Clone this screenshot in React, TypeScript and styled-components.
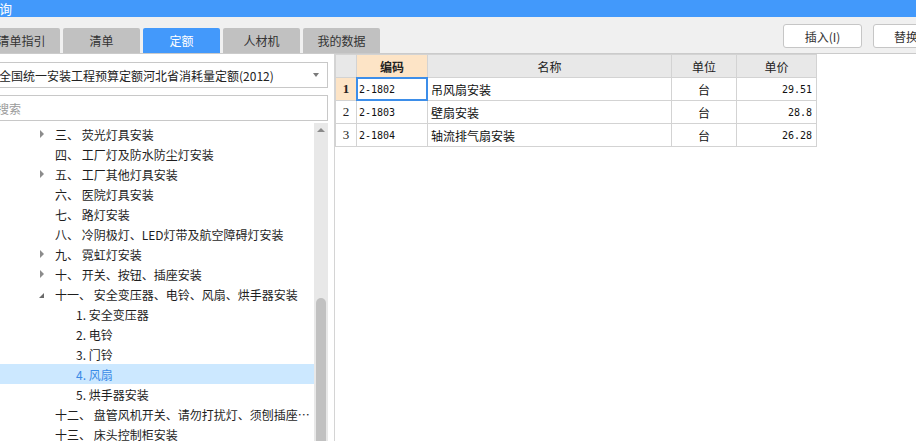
import styled, { createGlobalStyle } from "styled-components";

const GlobalStyle = createGlobalStyle`
  html, body {
    margin: 0;
    padding: 0;
    background: #fff;
  }
  body {
    font-family: "Noto Sans CJK SC", "Noto Sans", sans-serif;
    font-size: 12px;
    color: #222;
    overflow: hidden;
  }
  * {
    box-sizing: border-box;
  }
`;

type TreeItem = {
  label: string;
  level: number;
  arrow?: "closed" | "open";
  active?: boolean;
};

const treeItems: TreeItem[] = [
  { label: "三、 荧光灯具安装", level: 0, arrow: "closed" },
  { label: "四、 工厂灯及防水防尘灯安装", level: 0 },
  { label: "五、 工厂其他灯具安装", level: 0, arrow: "closed" },
  { label: "六、 医院灯具安装", level: 0 },
  { label: "七、 路灯安装", level: 0 },
  { label: "八、 冷阴极灯、LED灯带及航空障碍灯安装", level: 0 },
  { label: "九、 霓虹灯安装", level: 0, arrow: "closed" },
  { label: "十、 开关、按钮、插座安装", level: 0, arrow: "closed" },
  { label: "十一、 安全变压器、电铃、风扇、烘手器安装", level: 0, arrow: "open" },
  { label: "1. 安全变压器", level: 1 },
  { label: "2. 电铃", level: 1 },
  { label: "3. 门铃", level: 1 },
  { label: "4. 风扇", level: 1, active: true },
  { label: "5. 烘手器安装", level: 1 },
  { label: "十二、 盘管风机开关、请勿打扰灯、须刨插座箱安装", level: 0 },
  { label: "十三、 床头控制柜安装", level: 0 },
];

const rows = [
  { code: "2-1802", name: "吊风扇安装", unit: "台", price: "29.51" },
  { code: "2-1803", name: "壁扇安装", unit: "台", price: "28.8" },
  { code: "2-1804", name: "轴流排气扇安装", unit: "台", price: "26.28" },
];

const tabs = ["清单指引", "清单", "定额", "人材机", "我的数据"];

const App = () => {
  return (
    <Window>
      <GlobalStyle />
      <TitleBar>
        <TitleText>定额查询</TitleText>
      </TitleBar>
      <Toolbar>
        <Tabs>
          {tabs.map((t) => (
            <Tab key={t} $active={t === "定额"}>
              {t}
            </Tab>
          ))}
        </Tabs>
        <Buttons>
          <Button $width={79}>插入(I)</Button>
          <Button $width={66}>替换</Button>
        </Buttons>
      </Toolbar>
      <Main>
        <LeftPanel>
          <Select>
            <SelectText>全国统一安装工程预算定额河北省消耗量定额(2012)</SelectText>
            <SelectArrow />
          </Select>
          <Search placeholder="搜索" />
          <TreeArea>
            <TreeList>
              {treeItems.map((item) => (
                <TreeRow key={item.label} $level={item.level} $active={item.active}>
                  <ArrowSlot>
                    {item.arrow === "closed" && <ClosedArrow />}
                    {item.arrow === "open" && <OpenArrow />}
                  </ArrowSlot>
                  <TreeLabel>{item.label}</TreeLabel>
                </TreeRow>
              ))}
            </TreeList>
            <ScrollBar>
              <ScrollUp>
                <UpArrow />
              </ScrollUp>
              <ScrollThumb />
            </ScrollBar>
          </TreeArea>
        </LeftPanel>
        <RightPanel>
          <Grid>
            <HeadCell />
            <HeadCell $current>编码</HeadCell>
            <HeadCell>名称</HeadCell>
            <HeadCell>单位</HeadCell>
            <HeadCell>单价</HeadCell>
            {rows.map((r, i) => (
              <Row key={r.code}>
                <NumCell $current={i === 0}>{i + 1}</NumCell>
                <CodeCell $selected={i === 0}>{r.code}</CodeCell>
                <Cell>{r.name}</Cell>
                <Cell $align="center">{r.unit}</Cell>
                <PriceCell>{r.price}</PriceCell>
              </Row>
            ))}
          </Grid>
        </RightPanel>
      </Main>
    </Window>
  );
};

const Window = styled.div`
  width: 916px;
  height: 441px;
  overflow: hidden;
  display: flex;
  flex-direction: column;
`;

const TitleBar = styled.div`
  height: 17px;
  background: #4299fb;
  color: #fff;
  display: flex;
  align-items: center;
  overflow: hidden;
`;

const TitleText = styled.span`
  margin-left: -40px;
  font-size: 13px;
  line-height: 17px;
  white-space: nowrap;
`;

const Toolbar = styled.div`
  height: 37px;
  background: #f0f0f0;
  border-bottom: 1px solid #cbcbcb;
  display: flex;
  justify-content: space-between;
  overflow: hidden;
`;

const Tabs = styled.div`
  display: flex;
  align-items: flex-end;
  gap: 3px;
  margin-left: -17px;
`;

const Tab = styled.div<{ $active?: boolean }>`
  width: 77px;
  height: 25px;
  border-radius: 2px 2px 0 0;
  background: ${(p) => (p.$active ? "#4399fb" : "#c1c1c1")};
  color: ${(p) => (p.$active ? "#fff" : "#333")};
  display: flex;
  align-items: center;
  justify-content: center;
  font-size: 12px;
  white-space: nowrap;
`;

const Buttons = styled.div`
  display: flex;
  gap: 11px;
  padding-top: 7px;
  margin-right: -23px;
`;

const Button = styled.div<{ $width: number }>`
  width: ${(p) => p.$width}px;
  height: 24px;
  background: #fff;
  border: 1px solid #c6c6c6;
  border-radius: 3px;
  display: flex;
  align-items: center;
  justify-content: center;
  font-size: 12px;
  color: #333;
  white-space: nowrap;
`;

const Main = styled.div`
  flex: 1;
  display: flex;
  min-height: 0;
`;

const LeftPanel = styled.div`
  width: 343px;
  margin-left: -8px;
  padding: 8px 6px 0 0;
  border-right: 1px solid #d4d4d4;
  display: flex;
  flex-direction: column;
  flex-shrink: 0;
`;

const Select = styled.div`
  height: 26px;
  border: 1px solid #c8c8c8;
  background: #fff;
  display: flex;
  align-items: center;
  padding: 0 8px 0 6px;
`;

const SelectText = styled.span`
  flex: 1;
  white-space: nowrap;
  color: #222;
`;

const SelectArrow = styled.span`
  width: 0;
  height: 0;
  border-left: 3.5px solid transparent;
  border-right: 3.5px solid transparent;
  border-top: 4px solid #7a7a7a;
`;

const Search = styled.input`
  margin-top: 7px;
  height: 26px;
  border: 1px solid #c8c8c8;
  padding: 0 0 0 4px;
  font-family: inherit;
  font-size: 12px;
  outline: none;
  &::placeholder {
    color: #9a9a9a;
  }
`;

const TreeArea = styled.div`
  flex: 1;
  min-height: 0;
  margin-top: 2px;
  display: flex;
  overflow: hidden;
`;

const TreeList = styled.div`
  flex: 1;
  min-width: 0;
  padding-top: 1px;
`;

const TreeRow = styled.div<{ $level: number; $active?: boolean }>`
  height: 20px;
  display: flex;
  align-items: center;
  padding-left: ${(p) => 47 + p.$level * 21}px;
  padding-right: 4px;
  background: ${(p) => (p.$active ? "#cce8ff" : "transparent")};
  color: ${(p) => (p.$active ? "#3a8ae6" : "#1e1e1e")};
`;

const ArrowSlot = styled.span`
  width: 16px;
  flex-shrink: 0;
  display: flex;
  align-items: center;
`;

const ClosedArrow = styled.span`
  width: 0;
  height: 0;
  margin-left: 1px;
  border-top: 4px solid transparent;
  border-bottom: 4px solid transparent;
  border-left: 4px solid #8c8c8c;
`;

const OpenArrow = styled.span`
  width: 0;
  height: 0;
  margin-top: 2px;
  border-left: 5px solid transparent;
  border-bottom: 5px solid #6a6a6a;
`;

const TreeLabel = styled.span`
  white-space: nowrap;
  overflow: hidden;
  text-overflow: ellipsis;
`;

const ScrollBar = styled.div`
  width: 14px;
  flex-shrink: 0;
  background: #e8e8e8;
  display: flex;
  flex-direction: column;
  align-items: center;
`;

const ScrollUp = styled.div`
  height: 14px;
  display: flex;
  align-items: center;
  justify-content: center;
`;

const UpArrow = styled.span`
  width: 0;
  height: 0;
  border-left: 4px solid transparent;
  border-right: 4px solid transparent;
  border-bottom: 4px solid #8a8a8a;
`;

const ScrollThumb = styled.div`
  width: 10px;
  flex: 1;
  margin-top: 161px;
  border-radius: 5px 5px 0 0;
  background: #c1c1c1;
`;

const RightPanel = styled.div`
  flex: 1;
  background: #fff;
`;

const Grid = styled.div`
  display: grid;
  grid-template-columns: 20px 70px 243px 64px 79px;
  grid-auto-rows: 22px;
  gap: 1px;
  width: 482px;
  background: #d3d3d3;
  border: 1px solid #d3d3d3;
`;

const Row = styled.div`
  display: contents;
`;

const HeadCell = styled.div<{ $current?: boolean }>`
  background: ${(p) => (p.$current ? "#fde4c6" : "#e8e8e8")};
  font-weight: ${(p) => (p.$current ? 700 : 400)};
  display: flex;
  align-items: center;
  justify-content: center;
  color: #222;
`;

const Cell = styled.div<{ $align?: "left" | "center" | "right" }>`
  background: #fff;
  display: flex;
  align-items: center;
  justify-content: ${(p) =>
    p.$align === "center" ? "center" : p.$align === "right" ? "flex-end" : "flex-start"};
  padding: 0 3px;
  white-space: nowrap;
  overflow: hidden;
  color: #111;
`;

const NumCell = styled.div<{ $current?: boolean }>`
  background: ${(p) => (p.$current ? "#fde4c6" : "#fff")};
  font-family: "Liberation Serif", "DejaVu Serif", serif;
  font-size: 13px;
  font-weight: ${(p) => (p.$current ? 700 : 400)};
  display: flex;
  align-items: center;
  justify-content: center;
  color: #222;
`;

const CodeCell = styled.div<{ $selected?: boolean }>`
  background: #fff;
  display: flex;
  align-items: center;
  padding-left: 2px;
  font-family: "DejaVu Sans Mono", "Liberation Mono", monospace;
  font-size: 10px;
  color: #111;
  outline: ${(p) => (p.$selected ? "2px solid #3d8ee9" : "none")};
  outline-offset: -1px;
`;

const PriceCell = styled.div`
  background: #fff;
  display: flex;
  align-items: center;
  justify-content: flex-end;
  padding-right: 4px;
  font-family: "DejaVu Sans Mono", "Liberation Mono", monospace;
  font-size: 10px;
  color: #111;
`;

export default App;
